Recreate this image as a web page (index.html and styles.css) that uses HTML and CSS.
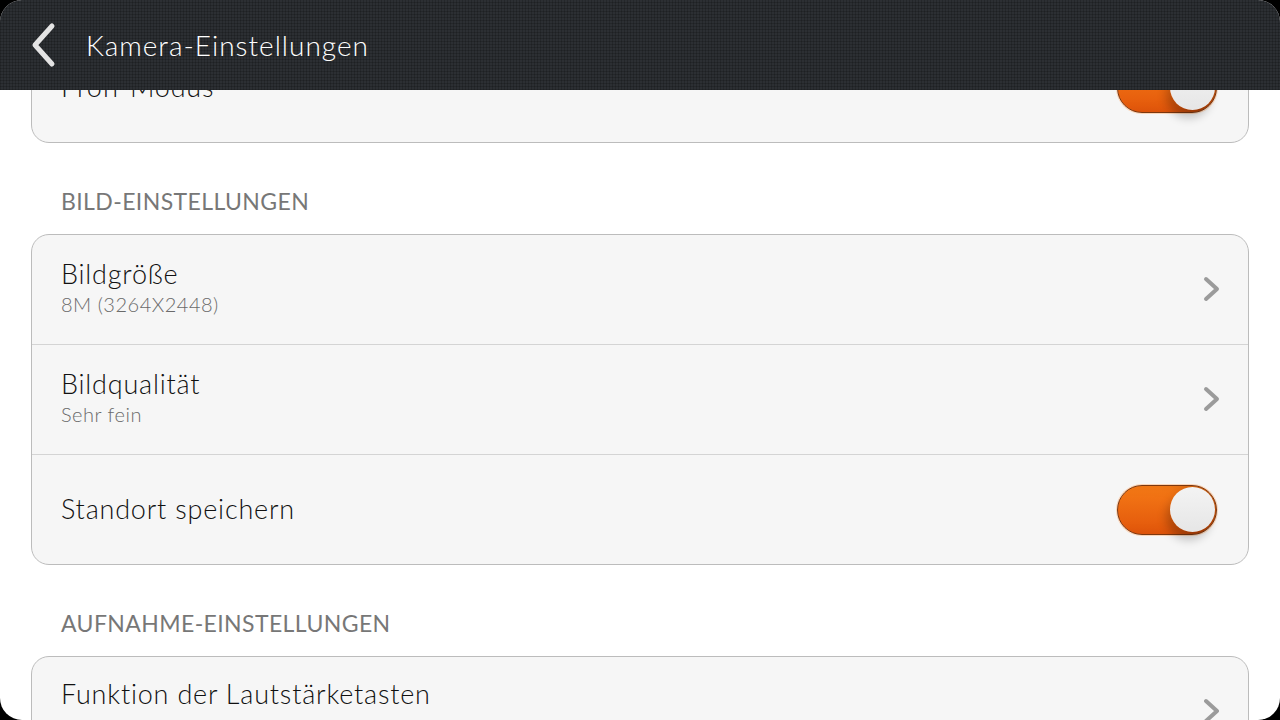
FILE: index.html
```html
<!DOCTYPE html>
<html lang="de">
<head>
  <meta charset="UTF-8" />
  <meta name="viewport" content="width=device-width, initial-scale=1.0"/>
  <title>Kamera-Einstellungen</title>
  <link rel="stylesheet" href="styles.css">
</head>
<body>
  <div class="screen">
    <header class="topbar">
      <svg class="back" width="30" height="46" viewBox="0 0 30 46">
        <polyline points="24,4 7,23 24,42" />
      </svg>
      <h1>Kamera-Einstellungen</h1>
    </header>

    <main class="content">
      <div class="card">
        <div class="row">
          <div class="text"><div class="title">Profi-Modus</div></div>
          <span class="toggle on"><span class="knob"></span></span>
        </div>
      </div>

      <h2 class="section">BILD-EINSTELLUNGEN</h2>
      <div class="card">
        <div class="row">
          <div class="text">
            <div class="title">Bildgröße</div>
            <div class="sub">8M (3264X2448)</div>
          </div>
          <svg class="chev" width="20" height="28" viewBox="0 0 20 28">
            <polyline points="4,3 15,13 4,23" />
          </svg>
        </div>
        <div class="row">
          <div class="text">
            <div class="title">Bildqualität</div>
            <div class="sub">Sehr fein</div>
          </div>
          <svg class="chev" width="20" height="28" viewBox="0 0 20 28">
            <polyline points="4,3 15,13 4,23" />
          </svg>
        </div>
        <div class="row">
          <div class="text"><div class="title">Standort speichern</div></div>
          <span class="toggle on"><span class="knob"></span></span>
        </div>
      </div>

      <h2 class="section">AUFNAHME-EINSTELLUNGEN</h2>
      <div class="card">
        <div class="row">
          <div class="text top"><div class="title">Funktion der Lautstärketasten</div></div>
          <svg class="chev" width="20" height="28" viewBox="0 0 20 28">
            <polyline points="4,3 15,13 4,23" />
          </svg>
        </div>
      </div>
    </main>
  </div>
</body>
</html>
```

FILE: styles.css
```css
body {
  margin: 0;
  padding: 0;
  background: #000;
  font-family: Lato, "Open Sans", sans-serif;
}

.screen {
  position: relative;
  width: 1280px;
  height: 720px;
  overflow: hidden;
  border-radius: 22px;
  background: #fff;
}

.topbar {
  position: absolute;
  top: 0;
  left: 0;
  right: 0;
  height: 90px;
  z-index: 2;
  display: flex;
  align-items: center;
  gap: 28px;
  padding-left: 28px;
  background-color: #2c2f33;
  background-image:
    repeating-linear-gradient(90deg, rgba(0, 0, 0, 0.18) 0 1px, transparent 1px 3px),
    repeating-linear-gradient(0deg, rgba(0, 0, 0, 0.18) 0 1px, transparent 1px 3px);
}

.back polyline {
  fill: none;
  stroke: #e4e4e4;
  stroke-width: 5;
  stroke-linecap: round;
  stroke-linejoin: round;
}

.topbar h1 {
  margin: 0;
  font-size: 28px;
  font-weight: 300;
  color: #fff;
  letter-spacing: 1px;
}

.content {
  padding-top: 32px;
}

.card {
  margin: 0 31px 0 31px;
  background: #f6f6f6;
  border: 1px solid #bcbcbc;
  border-radius: 18px;
}

.row {
  height: 109px;
  display: flex;
  align-items: center;
  justify-content: space-between;
  padding: 0 31px 0 29px;
}

.row + .row {
  border-top: 1px solid #d4d4d4;
}

.text {
  padding-bottom: 2px;
}

.title {
  font-size: 27px;
  line-height: 30px;
  font-weight: 300;
  letter-spacing: 0.8px;
  color: #111;
}

.sub {
  font-size: 20px;
  line-height: 30px;
  font-weight: 300;
  letter-spacing: 0.5px;
  color: #6a6a6a;
}

.text.top {
  align-self: flex-start;
  margin-top: 22px;
}

.section {
  margin: 0;
  padding: 45px 61px 20px;
  font-size: 23px;
  line-height: 26px;
  font-weight: 400;
  letter-spacing: 0.4px;
  color: #777;
}

.chev {
  margin-right: -5px;
}

.chev polyline {
  fill: none;
  stroke: #9b9b9b;
  stroke-width: 4;
  stroke-linecap: round;
  stroke-linejoin: round;
}

.toggle {
  position: relative;
  width: 98px;
  height: 48px;
  border-radius: 25px;
  border: 1px solid #7c3810;
  background: linear-gradient(to bottom, #f57a16, #e2560b);
  box-shadow: 0 0 0 1px rgba(255, 190, 140, 0.6), inset -30px 0 20px -12px rgba(90, 30, 0, 0.35);
}

.knob {
  position: absolute;
  top: 1px;
  right: 1px;
  width: 45px;
  height: 45px;
  border-radius: 50%;
  background: linear-gradient(to bottom, #f3f3f3, #e6e6e6);
  box-shadow: -4px 8px 10px rgba(0, 0, 0, 0.22);
}
```
